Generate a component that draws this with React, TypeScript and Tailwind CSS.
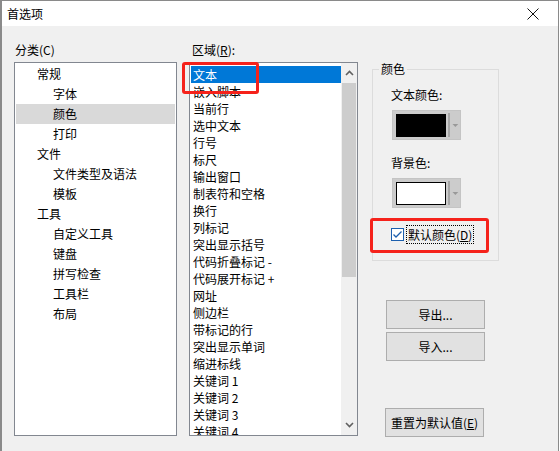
import React from "react";

const font = { fontFamily: '"Noto Sans CJK SC", "Microsoft YaHei", sans-serif' };

const leftItems: { t: string; lvl: number; sel?: boolean }[] = [
  { t: "常规", lvl: 1 },
  { t: "字体", lvl: 2 },
  { t: "颜色", lvl: 2, sel: true },
  { t: "打印", lvl: 2 },
  { t: "文件", lvl: 1 },
  { t: "文件类型及语法", lvl: 2 },
  { t: "模板", lvl: 2 },
  { t: "工具", lvl: 1 },
  { t: "自定义工具", lvl: 2 },
  { t: "键盘", lvl: 2 },
  { t: "拼写检查", lvl: 2 },
  { t: "工具栏", lvl: 2 },
  { t: "布局", lvl: 2 },
];

const midItems = [
  "文本",
  "嵌入脚本",
  "当前行",
  "选中文本",
  "行号",
  "标尺",
  "输出窗口",
  "制表符和空格",
  "换行",
  "列标记",
  "突出显示括号",
  "代码折叠标记 -",
  "代码展开标记 +",
  "网址",
  "侧边栏",
  "带标记的行",
  "突出显示单词",
  "缩进标线",
  "关键词 1",
  "关键词 2",
  "关键词 3",
  "关键词 4",
];

function ColorButton({ swatch }: { swatch: "black" | "white" }) {
  return (
    <div className="flex w-[69px] h-[30px] items-center border border-[#c4c4c4] bg-[#cccccc] pl-[3px]">
      {swatch === "black" ? (
        <div className="w-[52px] h-[23px] bg-black" />
      ) : (
        <div className="w-[52px] h-[23px] bg-white border border-black" />
      )}
      <div className="ml-[2px] w-[2px] h-[24px] bg-[#a5a5a5]" />
      <svg width="9" height="6" viewBox="0 0 9 6" className="ml-[1px]">
        <path d="M1.5 2 L7.5 2 L4.5 5 Z" fill="#999999" />
      </svg>
    </div>
  );
}

export default function App() {
  return (
    <div className="w-[560px] h-[451px] bg-white" style={font}>
      <div className="relative w-[559px] h-[451px] bg-[#f0f0f0] border-l-2 border-r border-t border-[#8a8a8a] flex flex-col overflow-hidden text-[12px] text-black">
        {/* Title bar */}
        <div className="h-[25px] bg-white flex items-center justify-between pl-[5px] pr-[19px] shrink-0">
          <span className="leading-[16px]">首选项</span>
          <svg width="12" height="12" viewBox="0 0 12 12">
            <path d="M0.5 0.5 L11.5 11.5 M11.5 0.5 L0.5 11.5" stroke="#111" strokeWidth="1" />
          </svg>
        </div>

        {/* Body */}
        <div className="flex pl-[12px] pt-[16px]">
          {/* Left column */}
          <div className="w-[163px] flex flex-col">
            <div className="h-[16px] leading-[16px] pl-px mb-[4px]">分类(C)</div>
            <div className="h-[374px] border border-[#828790] bg-white p-px overflow-hidden">
              {leftItems.map((it) => (
                <div
                  key={it.t}
                  className={`h-[20px] leading-[20px] ${it.lvl === 1 ? "pl-[21px]" : "pl-[37px]"} ${it.sel ? "bg-[#d9d9d9]" : ""}`}
                >
                  {it.t}
                </div>
              ))}
            </div>
          </div>

          {/* Middle column */}
          <div className="ml-[12px] w-[169px] flex flex-col">
            <div className="h-[16px] leading-[16px] pl-[3px] mb-[4px]">
              区域(<span className="underline">R</span>):
            </div>
            <div className="h-[374px] border border-[#828790] bg-white flex overflow-hidden">
              <div className="flex-1 pl-px pt-[3px] overflow-hidden">
                {midItems.map((t, i) => (
                  <div
                    key={t}
                    className={`h-[17px] leading-[17px] pl-[2px] whitespace-pre ${i === 0 ? "bg-[#0078d7] text-white" : ""}`}
                  >
                    {t}
                  </div>
                ))}
              </div>
              <div className="w-[16px] bg-[#f0f0f0] flex flex-col">
                <div className="h-[20px] flex items-center justify-center">
                  <svg width="9" height="6" viewBox="0 0 9 6">
                    <path d="M1 5 L4.5 1.5 L8 5" stroke="#606060" strokeWidth="1.6" fill="none" />
                  </svg>
                </div>
                <div className="mx-px h-[194px] bg-[#cdcdcd]" />
                <div className="flex-1" />
                <div className="h-[20px] flex items-center justify-center">
                  <svg width="9" height="6" viewBox="0 0 9 6">
                    <path d="M1 1 L4.5 4.5 L8 1" stroke="#606060" strokeWidth="1.6" fill="none" />
                  </svg>
                </div>
              </div>
            </div>
          </div>

          {/* Right column */}
          <div className="ml-[14px] w-[127px] flex flex-col">
            <div className="relative mt-[27px] h-[192px] border border-[#dcdcdc] pl-[18px] pt-[17px] flex flex-col">
              <div className="absolute -top-[9px] left-[6px] px-[2px] bg-[#f0f0f0] leading-[16px]">颜色</div>
              <div className="leading-[16px]">文本颜色:</div>
              <div className="mt-[7px] ml-px">
                <ColorButton swatch="black" />
              </div>
              <div className="mt-[15px] leading-[16px]">背景色:</div>
              <div className="mt-[7px] ml-px">
                <ColorButton swatch="white" />
              </div>
              <div className="mt-[17px] flex items-center h-[19px]">
                <div className="w-[13px] h-[13px] border border-[#1c5fae] bg-white flex items-center justify-center">
                  <svg width="11" height="11" viewBox="0 0 11 11">
                    <path d="M1.5 5.5 L4 8 L9.5 2.5" stroke="#1c5fae" strokeWidth="1.3" fill="none" />
                  </svg>
                </div>
                <div className="ml-[2px] h-[19px] border border-dotted border-black px-px leading-[17px]">
                  默认颜色(<span className="underline">D</span>)
                </div>
              </div>
            </div>

            <div className="mt-[39px] ml-[14px] w-[99px] h-[29px] border border-[#adadad] bg-[#e1e1e1] flex items-center justify-center">
              导出...
            </div>
            <div className="mt-[3px] ml-[14px] w-[99px] h-[29px] border border-[#adadad] bg-[#e1e1e1] flex items-center justify-center">
              导入...
            </div>
            <div className="mt-[47px] ml-[13px] w-[99px] h-[29px] border border-[#adadad] bg-[#e1e1e1] flex items-center justify-center">
              重置为默认值(<span className="underline">E</span>)
            </div>
          </div>
        </div>

        {/* Red annotation boxes */}
        <div className="absolute left-[180px] top-[61px] w-[77px] h-[32px] border-[3px] border-[#f5221b] rounded-[3px] pointer-events-none" />
        <div className="absolute left-[368px] top-[217px] w-[119px] h-[35px] border-[3px] border-[#f5221b] rounded-[3px] pointer-events-none" />
      </div>
    </div>
  );
}
